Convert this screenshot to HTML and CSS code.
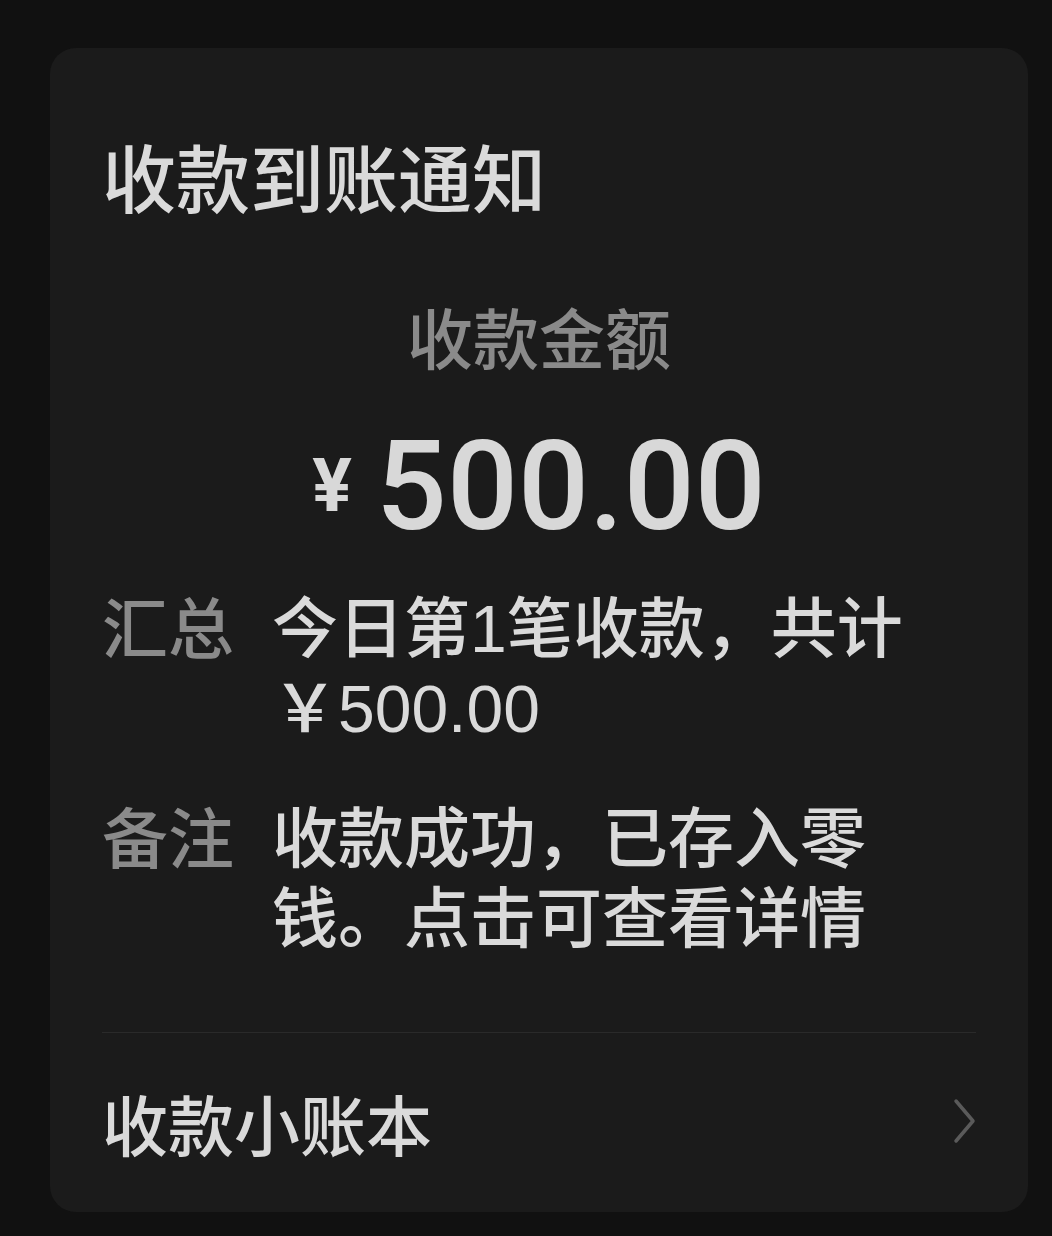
FILE: index.html
```html
<!DOCTYPE html>
<html lang="zh-CN">
<head>
  <meta charset="UTF-8" />
  <meta name="viewport" content="width=device-width, initial-scale=1" />
  <title>收款到账通知</title>
  <link rel="stylesheet" href="styles.css">
</head>
<body>
  <div class="card">
    <h1 class="title">收款到账通知</h1>

    <div class="amount-label">收款金额</div>
    <div class="amount"><span class="yen">¥</span>500.00</div>

    <div class="rows">
      <div class="row">
        <div class="row-label">汇总</div>
        <div class="row-value">今日第1笔收款，共计￥500.00</div>
      </div>
      <div class="row">
        <div class="row-label">备注</div>
        <div class="row-value">收款成功，已存入零钱。点击可查看详情</div>
      </div>
    </div>

    <div class="footer">
      <span>收款小账本</span>
      <svg class="chevron" width="26" height="48" viewBox="0 0 26 48">
        <polyline points="4,3 21,23 4,43" fill="none" stroke="#5a5a5a" stroke-width="3.5" stroke-linecap="round" stroke-linejoin="round" />
      </svg>
    </div>
  </div>
</body>
</html>
```

FILE: styles.css
```css
body {
  margin: 0;
  padding: 48px 24px 24px 50px;
  background: #111111;
  font-family: "Noto Sans CJK SC", "Noto Sans", sans-serif;
  color: #d9d9d9;
}
.card {
  width: 978px;
  box-sizing: border-box;
  background: #1b1b1b;
  border-radius: 26px;
  padding: 82px 52px 50px;
}
.title {
  margin: 0;
  font-size: 74px;
  line-height: 90px;
  font-weight: 500;
  color: #dadada;
}
.amount-label {
  margin-top: 75px;
  text-align: center;
  font-size: 66px;
  line-height: 80px;
  font-weight: 500;
  color: #8a8a8a;
}
.amount {
  margin-top: 38px;
  text-align: center;
  font-family: Roboto, "Liberation Sans", sans-serif;
  font-size: 125px;
  font-weight: 500;
  color: #d8d8d8;
}
.yen {
  font-size: 74px;
  font-weight: 700;
  margin-right: 24px;
  vertical-align: 18px;
}
.rows {
  margin-top: 24px;
}
.row {
  display: flex;
  gap: 38px;
  font-size: 66px;
  line-height: 80px;
  font-weight: 500;
}
.row + .row {
  margin-top: 45px;
}
.row-label {
  color: #8a8a8a;
  flex: none;
}
.row-value {
  width: 660px;
  padding-top: 5px;
  font-family: "Liberation Sans", "Noto Sans CJK SC", sans-serif;
  color: #dadada;
}
.footer {
  margin-top: 73px;
  border-top: 1px solid #2a2a2a;
  padding-top: 49px;
  display: flex;
  align-items: center;
  justify-content: space-between;
  font-size: 66px;
  line-height: 80px;
  font-weight: 500;
  color: #dadada;
}
.chevron {
  display: block;
  margin-right: -2px;
}
```
